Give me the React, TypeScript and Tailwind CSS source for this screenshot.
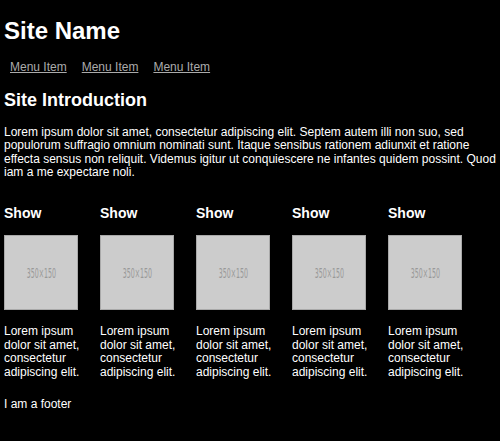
export default function App() {
  const menu = ["Menu Item", "Menu Item", "Menu Item"]
  const shows = [1, 2, 3, 4, 5]

  return (
    <div className="min-h-[441px] bg-black px-[4px] text-white font-['Liberation_Sans',Arial,sans-serif]">
      <h1 className="pt-[17px] text-[24px] font-bold leading-[normal]">Site Name</h1>

      <nav className="mt-[15px] flex gap-[15px] pl-[6px]">
        {menu.map((item, i) => (
          <a key={i} href="#" className="text-[12px] leading-[normal] text-[#ababab] underline">
            {item}
          </a>
        ))}
      </nav>

      <h2 className="mt-[16px] text-[18px] font-bold leading-[normal]">Site Introduction</h2>

      <p className="mt-[15px] text-[12px] leading-[13.3px]">
        Lorem ipsum dolor sit amet, consectetur adipiscing elit. Septem autem illi non suo, sed
        populorum suffragio omnium nominati sunt. Itaque sensibus rationem adiunxit et ratione
        effecta sensus non reliquit. Videmus igitur ut conquiescere ne infantes quidem possint. Quod
        iam a me expectare noli.
      </p>

      <div className="mt-[26px] flex gap-[16px]">
        {shows.map((n) => (
          <div key={n} className="w-[80px]">
            <h3 className="text-[14px] font-bold leading-[normal]">Show</h3>
            <div className="mt-[14px] flex h-[75px] w-[74px] items-center justify-center border border-[#a9a9a9] bg-[#cccccc]">
              <span className="font-['DejaVu_Sans_Condensed',sans-serif] text-[14px] leading-none text-[#999999] [transform:scaleX(0.5)]">
                350×150
              </span>
            </div>
            <p className="mt-[15px] text-[12px] leading-[13.6px]">
              Lorem ipsum dolor sit amet, consectetur adipiscing elit.
            </p>
          </div>
        ))}
      </div>

      <footer className="mt-[17px] pb-[20px] text-[12px] leading-[normal]">I am a footer</footer>
    </div>
  )
}
